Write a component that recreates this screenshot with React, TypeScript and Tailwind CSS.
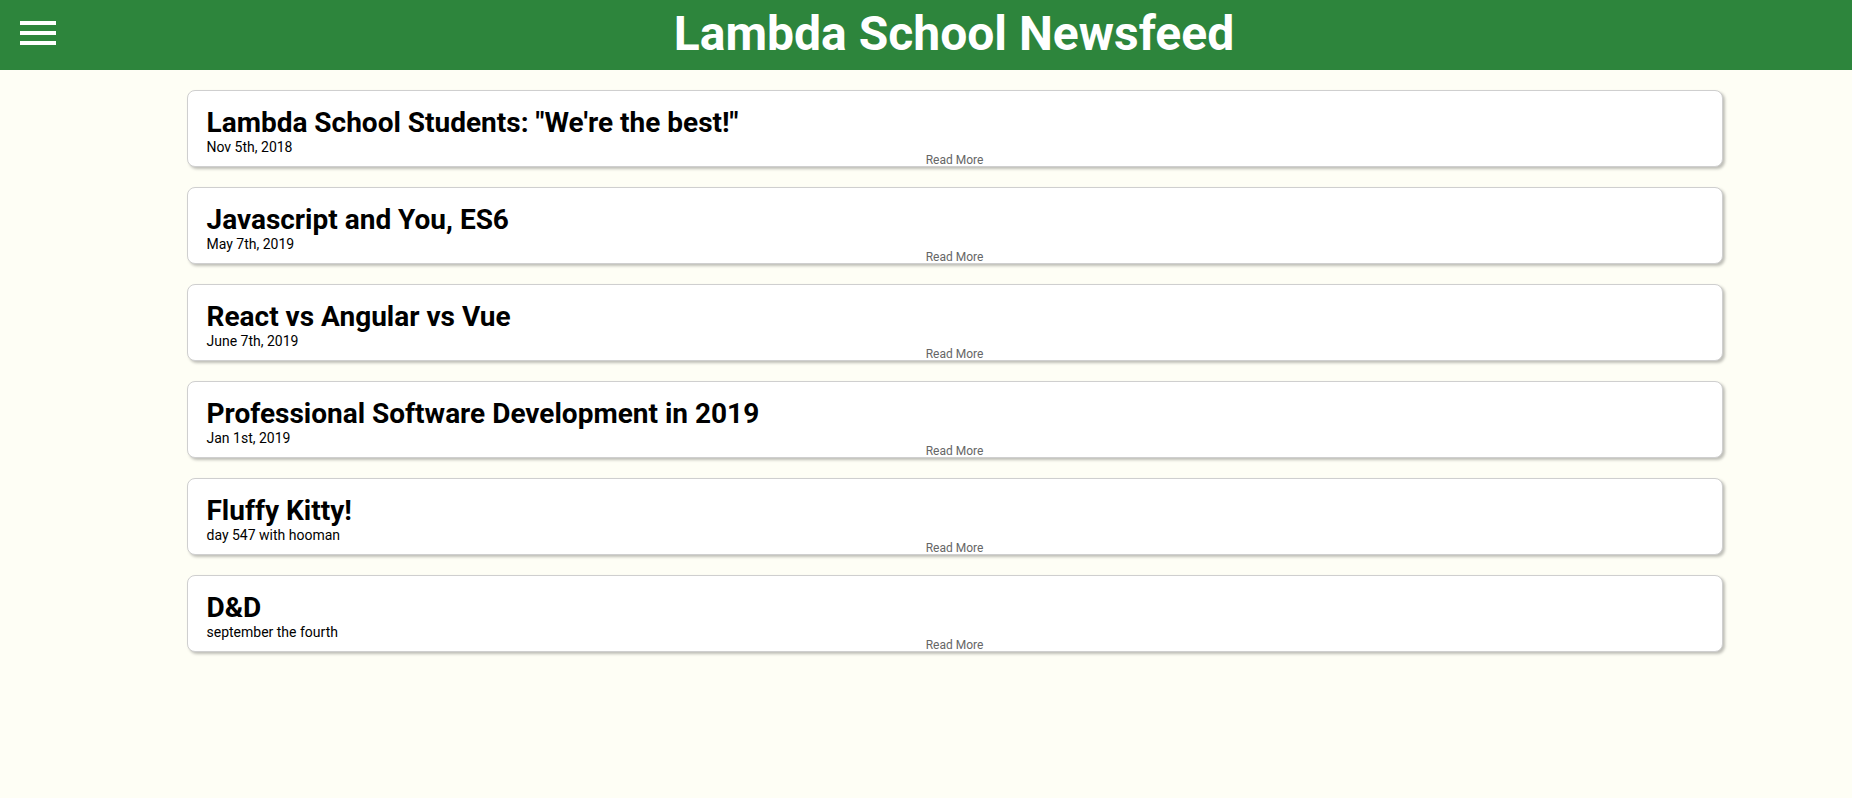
import React from 'react';

const articles = [
  { title: 'Lambda School Students: "We\'re the best!"', date: 'Nov 5th, 2018' },
  { title: 'Javascript and You, ES6', date: 'May 7th, 2019' },
  { title: 'React vs Angular vs Vue', date: 'June 7th, 2019' },
  { title: 'Professional Software Development in 2019', date: 'Jan 1st, 2019' },
  { title: 'Fluffy Kitty!', date: 'day 547 with hooman' },
  { title: 'D&D', date: 'september the fourth' },
];

function Header() {
  return (
    <header className="flex h-[70px] bg-[#2d853c] text-white">
      <button className="ml-5 mt-[21px] flex h-fit w-9 flex-col gap-[6px]">
        <span className="block h-1 w-9 bg-white" />
        <span className="block h-1 w-9 bg-white" />
        <span className="block h-1 w-9 bg-white" />
      </button>
      <h1 className="-mt-[2px] flex-1 text-center text-[48px] font-bold leading-normal">
        Lambda School Newsfeed
      </h1>
    </header>
  );
}

function Article({ title, date }: { title: string; date: string }) {
  return (
    <div className="flex w-[1536px] flex-col rounded-lg border border-[#cfcfcf] bg-white pl-[19px] pr-[19px] pt-[15px] shadow-[2px_2px_3px_rgba(0,0,0,0.25)]">
      <h2 className="text-[28px] font-bold leading-[33px] text-black">{title}</h2>
      <p className="text-[14px] leading-[17px] text-black">{date}</p>
      <span className="-mt-[2px] self-center text-[12px] leading-[12px] text-[#666]">Read More</span>
    </div>
  );
}

export default function App() {
  return (
    <div className="min-h-[798px] bg-[#fefef5] font-['Roboto',sans-serif]">
      <Header />
      <div className="flex">
        <div className="w-[57px] shrink-0" />
        <main className="flex flex-1 flex-col items-center gap-5 pt-5">
          {articles.map((a) => (
            <Article key={a.title} title={a.title} date={a.date} />
          ))}
        </main>
      </div>
    </div>
  );
}
